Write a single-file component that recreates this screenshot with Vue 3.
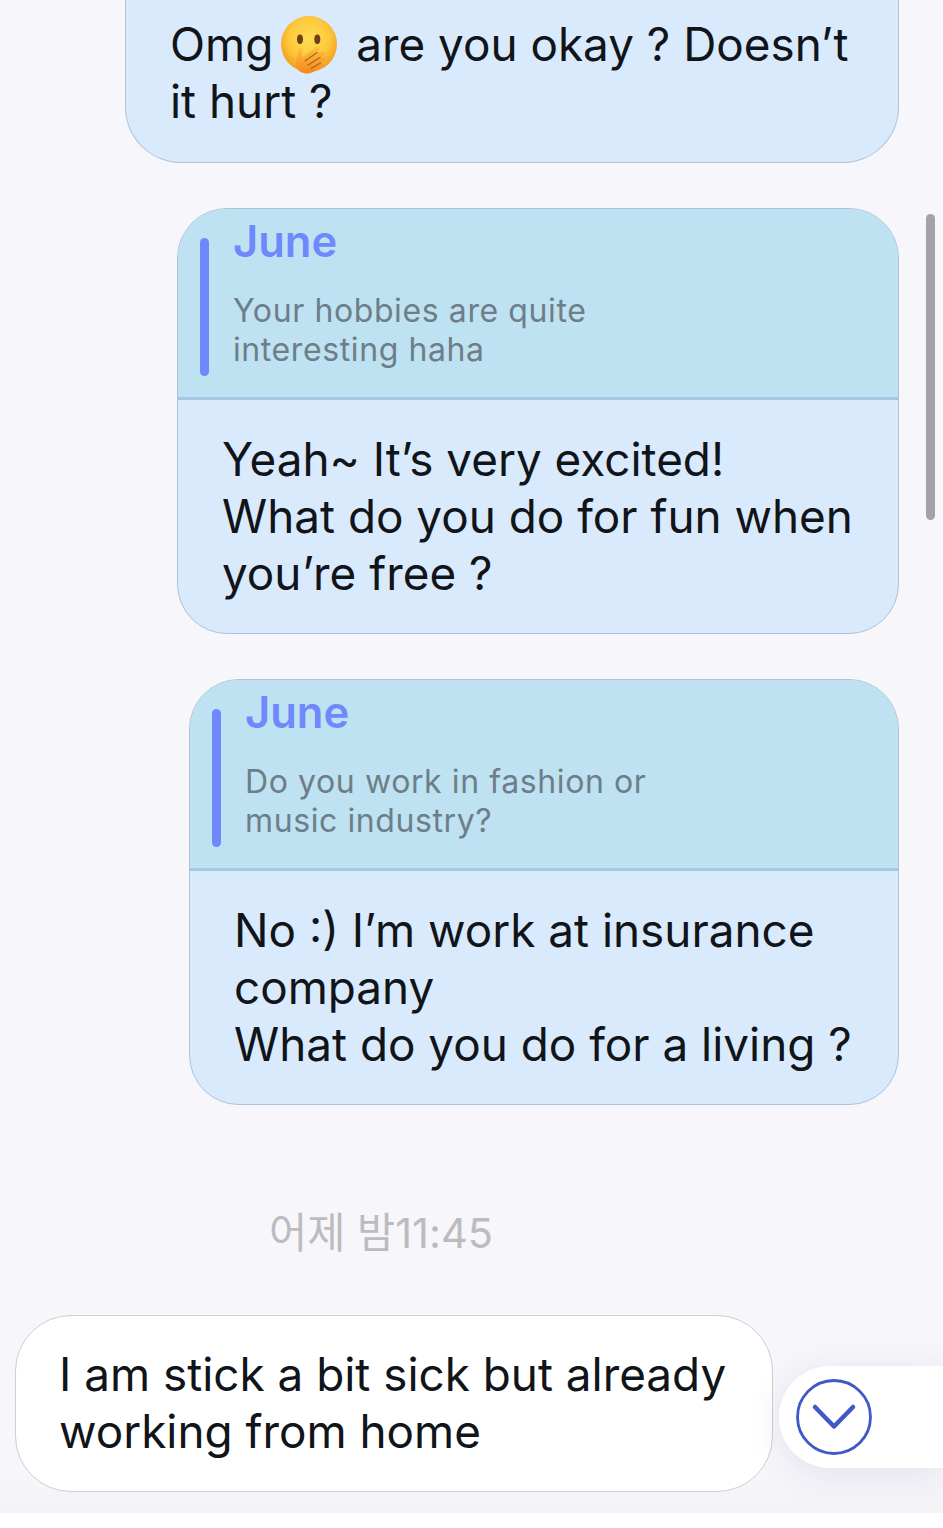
<template>
  <div class="screen">
    <main class="chat">
      <div class="bubble mine first">
        <p class="text">Omg<svg class="emoji" viewBox="0 0 56 58" role="img" aria-label="face with hand over mouth">
          <defs>
            <radialGradient id="face" cx="50%" cy="40%" r="60%">
              <stop offset="0" stop-color="#ffdc55" />
              <stop offset="0.6" stop-color="#fec93a" />
              <stop offset="1" stop-color="#f29a1d" />
            </radialGradient>
            <linearGradient id="hand" x1="0" y1="0" x2="0" y2="1">
              <stop offset="0" stop-color="#ffc043" />
              <stop offset="1" stop-color="#f4881a" />
            </linearGradient>
          </defs>
          <circle cx="28" cy="28" r="28" fill="url(#face)" />
          <ellipse cx="19" cy="23.300" rx="3" ry="4.800" fill="#6a4014" />
          <ellipse cx="36.300" cy="23.300" rx="3" ry="4.800" fill="#6a4014" />
          <path d="M15 49C15 44 16 38 17.500 33.500C18.200 31.600 21 31.800 21 34L21 41.500L35.500 31C37.500 29.800 39.800 32 38 34L36 36.500L41.500 35.500C43.500 34.800 45 37 43.200 38.500L39.500 41.500L43 40.800C45.300 40.500 46 43 44.300 44.200L39.500 47L41 47.200C43 47.500 43 50 41.300 50.500C38 52 35 55 31 56.500C26 58.500 20 57 17 54C15.500 52.500 15 51 15 49Z" fill="url(#hand)" />
          <path d="M24 45L36 36.500M27 49L39 41.500M30 52.500L39.500 47" stroke="#a9661a" stroke-width="1.200" stroke-linecap="round" fill="none" />
        </svg> are you okay ? Doesn’t it hurt ?</p>
      </div>

      <div v-for="reply in replies" :key="reply.cls" class="bubble mine" :class="reply.cls">
        <div class="quote">
          <span class="quote-bar"></span>
          <div class="quote-body">
            <div class="quote-name">{{ reply.name }}</div>
            <p class="quote-text" v-for="line in reply.quote" :key="line">{{ line }}</p>
          </div>
        </div>
        <div class="reply-body">
          <p class="text" v-for="line in reply.lines" :key="line">{{ line }}</p>
        </div>
      </div>

      <div class="time">어제 밤11:45</div>

      <div class="bubble theirs">
        <p class="text">I am stick a bit sick but already<br />working from home</p>
      </div>
    </main>

    <div class="scroll-thumb"></div>

    <button class="scroll-down" aria-label="Scroll to bottom">
      <svg width="76" height="76" viewBox="0 0 76 76" fill="none">
        <circle cx="38" cy="38" r="36.500" stroke="#3f59c6" stroke-width="2.800" />
        <path d="M19 28L38 47.500L57 28" stroke="#3f59c6" stroke-width="4.500" stroke-linecap="round" stroke-linejoin="round" />
      </svg>
    </button>

    <div class="footer"></div>
  </div>
</template>

<script setup>
const replies = [
  {
    name: 'June',
    cls: 'reply-a',
    quote: ['Your hobbies are quite', 'interesting haha'],
    lines: ['Yeah~ It’s very excited!', 'What do you do for fun when', 'you’re free ?'],
  },
  {
    name: 'June',
    cls: 'reply-b',
    quote: ['Do you work in fashion or', 'music industry?'],
    lines: ['No :) I’m work at insurance', 'company', 'What do you do for a living ?'],
  },
]
</script>

<style>
html,
body {
  margin: 0;
  background: #fff;
}
</style>

<style scoped>
.screen {
  position: relative;
  width: 943px;
  height: 1528px;
  overflow: hidden;
  background: #fff;
  font-family: Inter, 'Noto Sans CJK KR', sans-serif;
}

.chat {
  height: 1513px;
  box-sizing: border-box;
  background: linear-gradient(#f6f6fb 1470px, #f2f2f7 1513px);
  display: flex;
  flex-direction: column;
  align-items: flex-end;
  padding-right: 44px;
}

.text,
.quote-text {
  margin: 0;
}

.text {
  font-size: 45.850px;
  line-height: 57px;
  color: #111418;
}

.bubble {
  box-sizing: border-box;
  border: 1.500px solid #aec3d9;
  border-radius: 50px;
  background: #d9eafd;
  overflow: hidden;
}

.first {
  width: 774px;
  height: 163px;
  padding: 16px 40px 0 44px;
  border-top: 0;
  border-radius: 0 0 56px 56px;
}

.emoji {
  width: 56px;
  height: 58px;
  margin: -12px 6px -12px 8px;
  vertical-align: -1px;
}

.reply-a {
  width: 722px;
  height: 426px;
  margin-top: 45px;
}

.reply-b {
  width: 710px;
  height: 426px;
  margin-top: 45px;
}

.quote {
  height: 191px;
  box-sizing: border-box;
  background: #bee2f1;
  border-bottom: 3px solid #a3c8e2;
  display: flex;
  gap: 24px;
  padding: 29px 0 0 22px;
}

.quote-bar {
  width: 9px;
  height: 138px;
  border-radius: 5px;
  background: #6f89fc;
}

.quote-body {
  margin-top: -29px;
}

.quote-name {
  font-size: 43.500px;
  line-height: 64px;
  font-weight: 600;
  color: #6f89fc;
  margin-bottom: 18px;
}

.quote-text {
  font-size: 32px;
  line-height: 39px;
  color: #6d7e88;
  letter-spacing: 0.600px;
}

.reply-body {
  padding: 31px 0 0 44px;
}

.time {
  align-self: flex-start;
  margin: 103px 0 0 269px;
  font-size: 41.500px;
  line-height: 50px;
  color: #bcbcc0;
}

.theirs {
  align-self: flex-start;
  width: 758px;
  height: 177px;
  margin: 57px 0 0 15px;
  padding: 30px 0 0 43px;
  background: #fff;
  border-color: #cfcfd2;
  border-radius: 56px;
}

/* overlays */
.scroll-thumb {
  position: absolute;
  left: 926px;
  top: 214px;
  width: 9px;
  height: 306px;
  border-radius: 5px;
  background: #a3a2a8;
}

.scroll-down {
  position: absolute;
  left: 779px;
  top: 1366px;
  width: 164px;
  height: 102px;
  padding: 0 0 0 17px;
  display: flex;
  align-items: center;
  border: 0;
  border-radius: 51px 0 0 51px;
  background: #fff;
  box-shadow: 0 6px 36px rgba(50, 50, 90, 0.1);
}

.footer {
  height: 15px;
  background: #fff;
}
</style>
